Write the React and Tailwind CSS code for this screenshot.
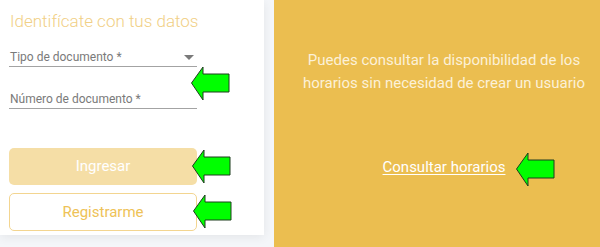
function Arrow({ className }) {
  return (
    <svg
      className={`absolute ${className}`}
      width="40"
      height="36"
      viewBox="0 0 40 36"
    >
      <polygon
        points="1.5,17 13,1 13,8 39,8 39,26 13,26 13,34"
        fill="#00ff00"
        stroke="#1f3d1f"
        strokeWidth="1"
        strokeLinejoin="miter"
      />
    </svg>
  );
}

export default function App() {
  return (
    <div
      className="relative w-[600px] h-[247px] flex bg-[#f4f6f9] overflow-hidden"
      style={{ fontFamily: "Roboto, 'Liberation Sans', sans-serif" }}
    >
      {/* left card */}
      <div className="w-[264px] h-[235px] bg-white shadow-[0_2px_10px_rgba(0,0,0,0.07)] pt-[9px]">
        <h1 className="pl-[10px] text-[17px] leading-[24px] font-light text-[#f1cf85]">
          Identifícate con tus datos
        </h1>

        <div className="ml-[9px] mt-[16px] w-[188px] border-b border-[#a3a3a3] pb-[1px] flex items-center justify-between text-[12px] leading-[16px]">
          <span className="pl-[1px] text-[#7a7a7a]">Tipo de documento *</span>
          <svg width="10" height="6" viewBox="0 0 10 6" className="mr-[3px] mt-[1px]">
            <polygon points="0,0 10,0 5,5" fill="#7a7a7a" />
          </svg>
        </div>

        <div className="ml-[9px] mt-[24px] w-[188px] border-b border-[#a3a3a3] pb-[1px] text-[12px] leading-[16px]">
          <span className="block pl-[1px] text-[#7a7a7a]">Número de documento *</span>
        </div>

        <button className="ml-[9px] mt-[39px] w-[188px] h-[37px] rounded-[5px] bg-[#f5dea6] text-white text-[15px] flex items-center justify-center">
          Ingresar
        </button>
        <button className="ml-[9px] mt-[8px] w-[188px] h-[38px] rounded-[5px] bg-white border border-[#f3d590] text-[#eec257] text-[15px] flex items-center justify-center">
          Registrarme
        </button>
      </div>

      {/* right panel */}
      <div className="ml-[10px] flex-1 bg-[#ebbe50] flex flex-col items-center pt-[49px] pl-[14px]">
        <p className="text-[15px] leading-[23px] text-[#fcf1d8] text-center">
          Puedes consultar la disponibilidad de los
          <br />
          horarios sin necesidad de crear un usuario
        </p>
        <a className="mt-[61px] text-[15px] leading-[23px] text-white underline underline-offset-2 cursor-pointer">
          Consultar horarios
        </a>
      </div>

      <Arrow className="left-[190px] top-[66px]" />
      <Arrow className="left-[191px] top-[149px]" />
      <Arrow className="left-[192px] top-[194px]" />
      <Arrow className="left-[515px] top-[152px]" />
    </div>
  );
}
